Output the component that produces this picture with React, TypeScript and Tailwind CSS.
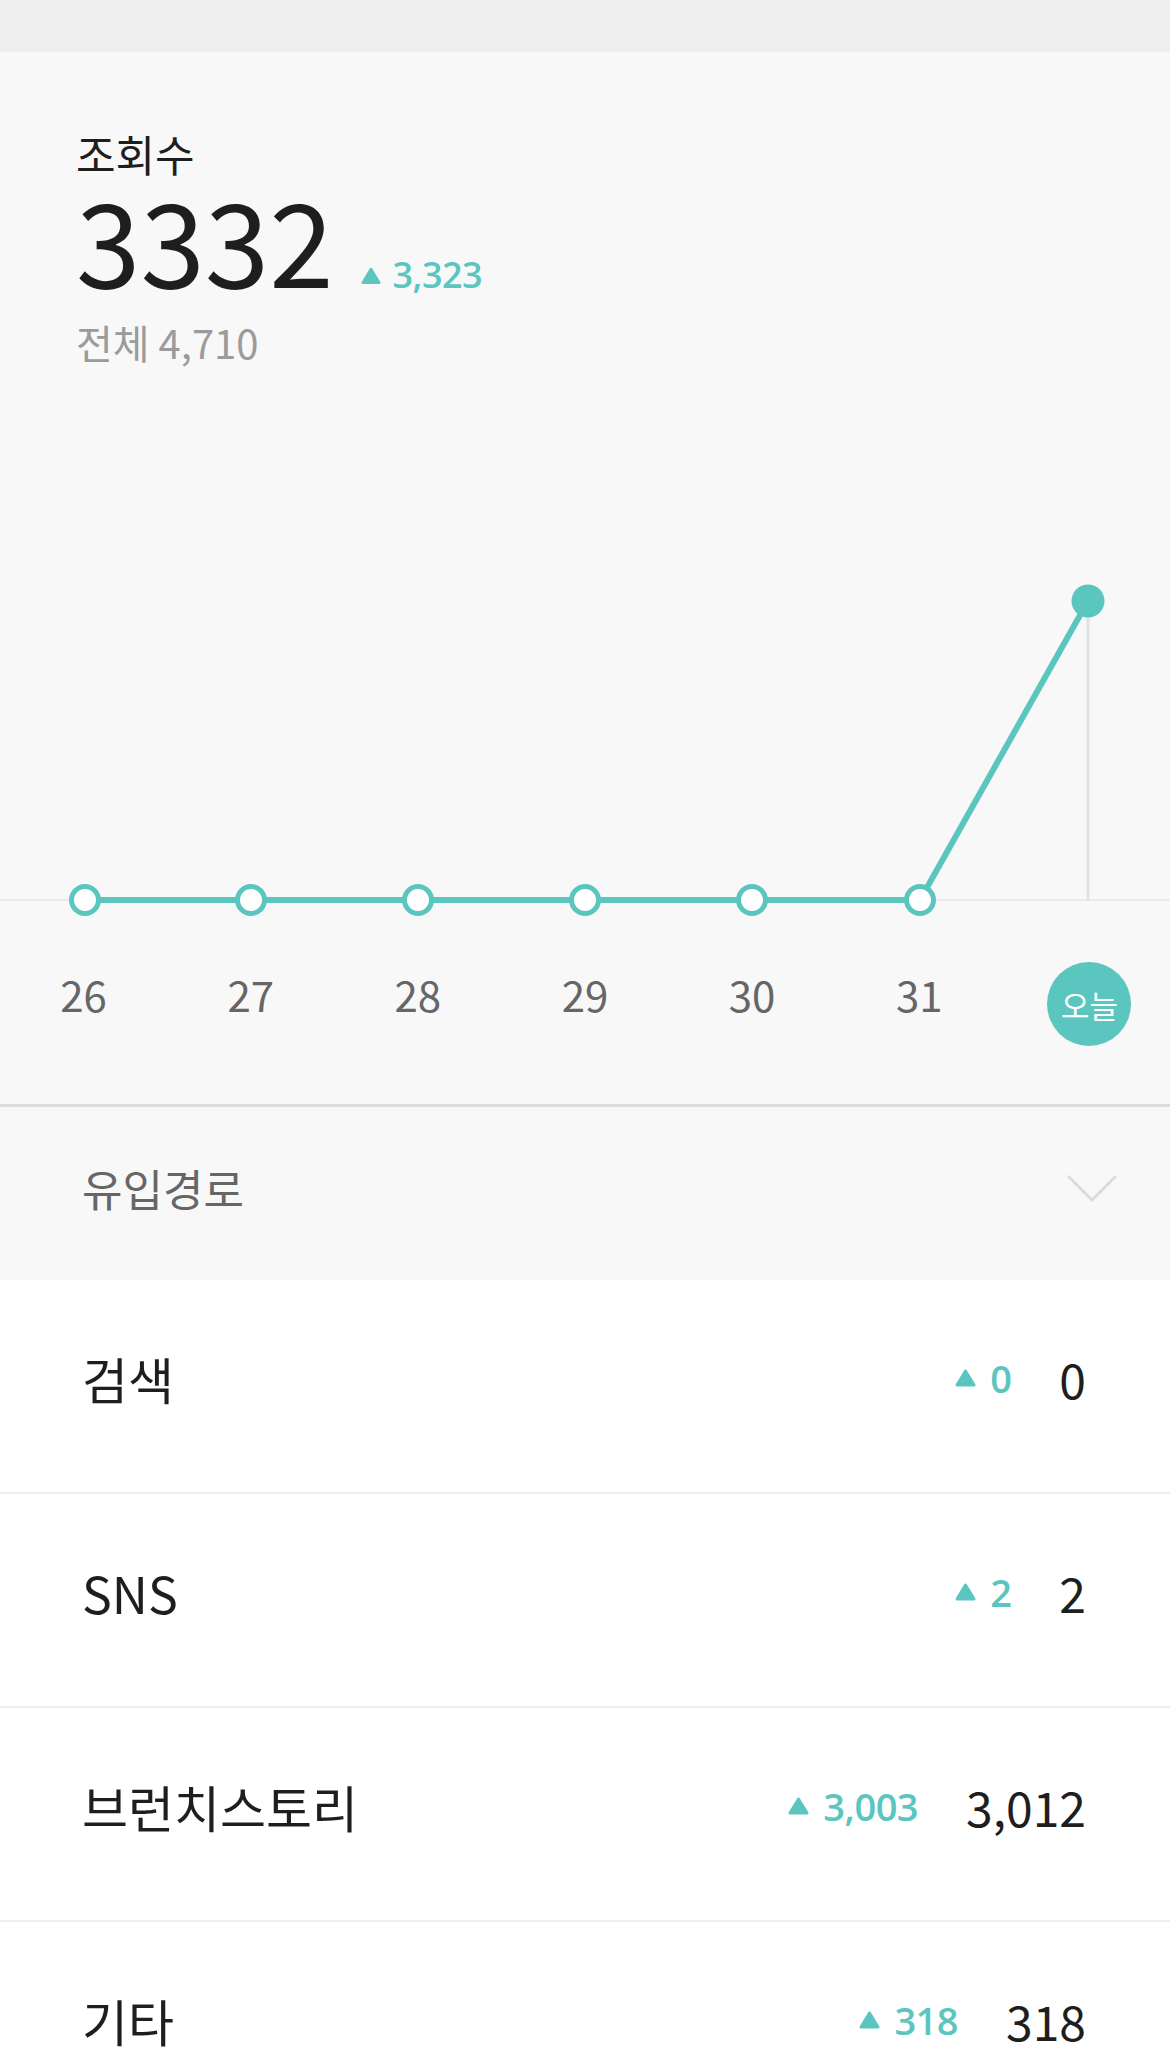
import React from "react";

const TEAL = "#5bc5bf";

const days = ["26", "27", "28", "29", "30", "31"];
const pointsX = [85, 251, 418, 585, 752, 920];
const todayX = 1088;
const baseY = 538;
const todayY = 239;

const sources = [
  { name: "검색", diff: "0", total: "0" },
  { name: "SNS", diff: "2", total: "2" },
  { name: "브런치스토리", diff: "3,003", total: "3,012" },
  { name: "기타", diff: "318", total: "318" },
];

function UpTriangle({ w = 21, h = 18 }: { w?: number; h?: number }) {
  return (
    <svg width={w} height={h} viewBox="0 0 21 18" className="shrink-0 block">
      <polygon
        points="10.5,2 19,16 2,16"
        fill={TEAL}
        stroke={TEAL}
        strokeWidth="3"
        strokeLinejoin="round"
      />
    </svg>
  );
}

function ViewsChart() {
  const line = [...pointsX.map((x) => `${x},${baseY}`), `${todayX},${todayY}`].join(" ");
  return (
    <svg width="1170" height="580" viewBox="0 0 1170 580" className="block">
      {/* 기준선 */}
      <line x1="0" y1={baseY} x2="1170" y2={baseY} stroke="#ebebeb" strokeWidth="2" />
      <line x1={todayX} y1={todayY} x2={todayX} y2={baseY} stroke="#e2e2e2" strokeWidth="3" />
      <polyline points={line} fill="none" stroke={TEAL} strokeWidth="6" strokeLinejoin="round" />
      {pointsX.map((x) => (
        <circle key={x} cx={x} cy={baseY} r="13.5" fill="#ffffff" stroke={TEAL} strokeWidth="5" />
      ))}
      <circle cx={todayX} cy={todayY} r="16.5" fill={TEAL} />
    </svg>
  );
}

export default function App() {
  return (
    <div className="w-[1170px] h-[2072px] overflow-hidden bg-white font-['Noto_Sans_CJK_KR','Noto_Sans',sans-serif]">
      {/* 상단 바 */}
      <div className="h-[52px] bg-[#eeeeee]" />

      {/* 조회수 헤더 + 그래프 */}
      <section className="bg-[#f8f8f8] pt-[80px] pb-[58px] border-b-[3px] border-[#dcdcdc]">
        <div className="pl-[76px]">
          <div className="text-[43px] leading-[43px] text-[#1e1e1e]">조회수</div>
          <div className="mt-[5px] flex items-baseline">
            <span className="text-[116px] leading-[115px] text-[#1e1e1e]">3332</span>
            <span className="ml-[27px] mr-[12px] self-end mb-[10px]">
              <UpTriangle w={20} h={18} />
            </span>
            <span className="font-['Open_Sans',sans-serif] text-[36px] leading-[36px] font-semibold tracking-[-0.5px] text-[#5bc5bf]">
              3,323
            </span>
          </div>
          <div className="mt-[27px] text-[40px] leading-[40px] text-[#9b9b9b]">전체 4,710</div>
        </div>

        <ViewsChart />

        <div className="mt-[20px] grid grid-cols-7 h-[84px]">
          {days.map((d) => (
            <div key={d} className="flex justify-center pt-[11px]">
              <span className="text-[42px] leading-[42px] text-[#666666]">{d}</span>
            </div>
          ))}
          <div className="flex justify-center pl-[6px]">
            <div className="w-[84px] h-[84px] rounded-full bg-[#5bc5bf] flex items-center justify-center">
              <span className="text-[31px] leading-none text-white">오늘</span>
            </div>
          </div>
        </div>
      </section>

      {/* 유입경로 */}
      <div className="h-[173px] bg-[#f8f8f8] flex items-center justify-between pl-[82px] pr-[52px] pb-[11px]">
        <span className="text-[44px] leading-none text-[#666666]">유입경로</span>
        <svg width="52" height="28" viewBox="0 0 52 28">
          <polyline points="2,2 26,26 50,2" fill="none" stroke="#dcdcdc" strokeWidth="3" />
        </svg>
      </div>

      <ul>
        {sources.map((s) => (
          <li
            key={s.name}
            className="h-[214px] flex items-center justify-between pl-[82px] pr-[84px] pb-[16px] border-b-2 border-[#eeeeee]"
          >
            <span className="text-[50px] leading-none text-[#1e1e1e]">{s.name}</span>
            <div className="flex items-center">
              <UpTriangle />
              <span className="ml-[14px] font-['Open_Sans',sans-serif] text-[38px] leading-none font-semibold tracking-[-0.5px] text-[#5bc5bf]">
                {s.diff}
              </span>
              <span className="ml-[48px] text-[48px] leading-none text-[#1e1e1e]">{s.total}</span>
            </div>
          </li>
        ))}
      </ul>
    </div>
  );
}
